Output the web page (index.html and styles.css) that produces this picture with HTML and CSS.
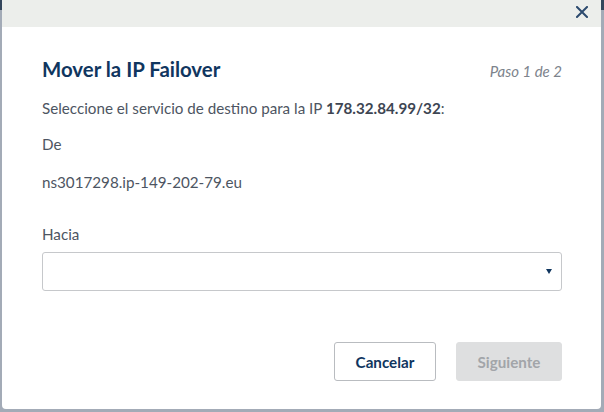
FILE: index.html
```html
<!DOCTYPE html>
<html lang="es">
<head>
<meta charset="utf-8">
<link rel="stylesheet" href="styles.css">
</head>
<body>
<div class="modal">
  <div class="modal-header">
    <button class="close" aria-label="Cerrar">
      <svg width="12" height="12" viewBox="0 0 12 12"><path d="M1 1L11 11M11 1L1 11" stroke="#2c4a6e" stroke-width="2" stroke-linecap="square"/></svg>
    </button>
  </div>
  <div class="modal-body">
    <div class="title-row">
      <h2 class="title">Mover la IP Failover</h2>
      <span class="step">Paso 1 de 2</span>
    </div>
    <p class="text intro">Seleccione el servicio de destino para la IP <strong>178.32.84.99/32</strong>:</p>
    <p class="text from">De</p>
    <p class="text host">ns3017298.ip-149-202-79.eu</p>
    <label class="label">Hacia</label>
    <div class="select"><span class="arrow"></span></div>
    <div class="actions">
      <button class="btn btn-default">Cancelar</button>
      <button class="btn btn-disabled">Siguiente</button>
    </div>
  </div>
</div>
</body>
</html>
```

FILE: styles.css
```css
html, body {
  margin: 0;
  padding: 0;
  height: 100%;
}
body {
  background: linear-gradient(to bottom, #34465c 0, #34465c 10px, #a3abb7 10px);
  font-family: "Source Sans Pro", Lato, "Noto Sans", sans-serif;
  color: #4d5562;
  overflow: hidden;
}
.modal {
  margin: 0 3px 0 2px;
  height: 409px;
  background: #fff;
  border-radius: 0 0 4px 4px;
  display: flex;
  flex-direction: column;
}
.modal-header {
  height: 27px;
  background: #eceeeb;
  display: flex;
  justify-content: flex-end;
  align-items: flex-start;
  padding-right: 13px;
}
.close {
  border: 0;
  background: none;
  padding: 0;
  margin-top: 6px;
  width: 12px;
  height: 12px;
  display: block;
  cursor: pointer;
}
.close svg { display: block; }
.modal-body {
  padding: 29px 39px 0 40px;
}
.title-row {
  display: flex;
  justify-content: space-between;
  align-items: baseline;
}
.title {
  margin: 0;
  font-size: 20.4px;
  font-weight: 700;
  color: #10365f;
  line-height: 26px;
}
.step {
  font-style: italic;
  font-size: 15px;
  color: #7d838c;
}
.text {
  margin: 0;
  font-size: 15.2px;
  line-height: 20px;
}
.intro { margin-top: 16px; }
.from { margin-top: 16px; }
.host { margin-top: 18px; }
.text strong { font-weight: 700; color: #3d4552; }
.label {
  display: block;
  margin-top: 32px;
  font-size: 15.2px;
  line-height: 20px;
}
.select {
  margin-top: 8px;
  height: 37px;
  border: 1px solid #c6c8cb;
  border-radius: 3px;
  display: flex;
  justify-content: flex-end;
  align-items: center;
  padding-right: 9px;
}
.arrow {
  width: 0;
  height: 0;
  border-left: 3px solid transparent;
  border-right: 3px solid transparent;
  border-top: 5px solid #10365f;
}
.actions {
  margin-top: 51px;
  display: flex;
  justify-content: flex-end;
  gap: 20px;
}
.btn {
  height: 39px;
  border-radius: 3px;
  font-family: inherit;
  font-size: 15.2px;
  font-weight: 700;
  padding: 0;
}
.btn-default {
  width: 102px;
  background: #fff;
  border: 1px solid #b9bcc0;
  color: #10365f;
}
.btn-disabled {
  width: 106px;
  background: #dedfe0;
  border: 1px solid #dedfe0;
  color: #a2a5a9;
}
```
